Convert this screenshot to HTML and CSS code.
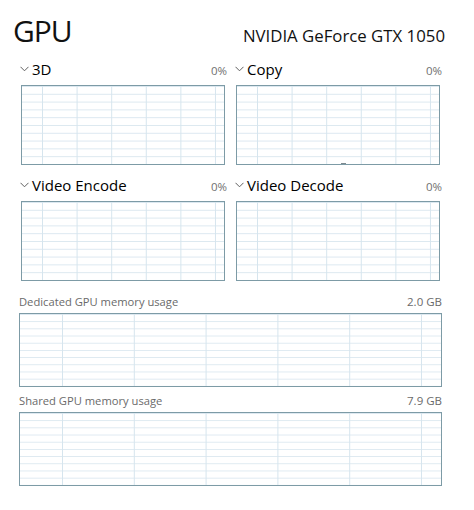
FILE: index.html
```html
<!DOCTYPE html>
<html>
<head>
<meta charset="utf-8">
<link rel="stylesheet" href="styles.css">
</head>
<body>
<div class="page">
  <div class="header">
    <div class="title">GPU</div>
    <div class="gpu-name">NVIDIA GeForce GTX 1050</div>
  </div>

  <div class="row">
    <div class="panel">
      <div class="plabel">
        <span class="name"><svg class="chev" width="9" height="6" viewBox="0 0 9 6"><polyline points="0.5,0.8 4.5,4.8 8.5,0.8" fill="none" stroke="#606060" stroke-width="1"/></svg>3D</span>
        <span class="pct">0%</span>
      </div>
      <div class="graph small"></div>
    </div>
    <div class="panel">
      <div class="plabel">
        <span class="name"><svg class="chev" width="9" height="6" viewBox="0 0 9 6"><polyline points="0.5,0.8 4.5,4.8 8.5,0.8" fill="none" stroke="#606060" stroke-width="1"/></svg>Copy</span>
        <span class="pct">0%</span>
      </div>
      <div class="graph small"><span class="spike"></span></div>
    </div>
  </div>

  <div class="row row2">
    <div class="panel">
      <div class="plabel">
        <span class="name"><svg class="chev" width="9" height="6" viewBox="0 0 9 6"><polyline points="0.5,0.8 4.5,4.8 8.5,0.8" fill="none" stroke="#606060" stroke-width="1"/></svg>Video Encode</span>
        <span class="pct">0%</span>
      </div>
      <div class="graph small"></div>
    </div>
    <div class="panel">
      <div class="plabel">
        <span class="name"><svg class="chev" width="9" height="6" viewBox="0 0 9 6"><polyline points="0.5,0.8 4.5,4.8 8.5,0.8" fill="none" stroke="#606060" stroke-width="1"/></svg>Video Decode</span>
        <span class="pct">0%</span>
      </div>
      <div class="graph small"></div>
    </div>
  </div>

  <div class="mem first">
    <div class="mlabel"><span>Dedicated GPU memory usage</span><span>2.0 GB</span></div>
    <div class="graph wide"></div>
  </div>
  <div class="mem">
    <div class="mlabel"><span>Shared GPU memory usage</span><span>7.9 GB</span></div>
    <div class="graph wide"></div>
  </div>
</div>
</body>
</html>
```

FILE: styles.css
```css
html, body {
  margin: 0;
  padding: 0;
  background: #ffffff;
}

.page {
  width: 474px;
  height: 510px;
  box-sizing: border-box;
  padding: 11px 32px 0 18px;
  font-family: "Open Sans", "Noto Sans", sans-serif;
  color: #000;
}

.header {
  display: flex;
  justify-content: space-between;
  align-items: baseline;
  height: 40px;
  margin-left: -5px;
  margin-right: -3px;
}

.title {
  font-size: 30px;
  line-height: 40px;
  letter-spacing: -1px;
  color: #111;
}

.gpu-name {
  font-size: 16.8px;
  line-height: 40px;
  color: #111;
}

.row {
  display: flex;
  gap: 6px;
  margin-top: 8px;
}

.row2 {
  margin-top: 10px;
}

.panel {
  width: 209px;
}

.plabel {
  display: flex;
  justify-content: space-between;
  align-items: baseline;
  height: 20px;
  margin-bottom: 6px;
}

.plabel .name {
  font-size: 15px;
  line-height: 20px;
  padding-left: 2px;
}

.chev {
  margin-right: 3px;
  vertical-align: 3px;
}

.pct {
  font-size: 11.5px;
  color: #707070;
}

.graph {
  box-sizing: border-box;
  border: 1px solid #7d9ba6;
  position: relative;
  background-color: #fff;
  background-image:
    linear-gradient(to right, #d6e5ee 1px, transparent 1px),
    linear-gradient(to bottom, #dce8f0 1px, transparent 1px);
  background-repeat: repeat;
}

.graph.small {
  width: 204px;
  height: 80px;
  margin: 0 2px 0 3px;
  background-size: 34.6px 100%, 100% 7.8px;
  background-position: 20px 0, 0 0;
}

.graph.wide {
  width: 423px;
  height: 74px;
  margin-left: 1px;
  background-size: 71.8px 100%, 100% 7.2px;
  background-position: 42px 0, 0 0;
}

.spike {
  position: absolute;
  left: 104px;
  bottom: 0;
  width: 5px;
  height: 1px;
  background: #7d8a90;
}

.mem {
  width: 424px;
  margin-top: 6px;
}

.mem.first {
  margin-top: 13px;
}

.mlabel {
  display: flex;
  justify-content: space-between;
  align-items: baseline;
  font-size: 11.2px;
  line-height: 16px;
  color: #6a6a6a;
  padding-left: 1px;
  margin-bottom: 3px;
}

.mlabel span:last-child {
  font-size: 11.5px;
}
```
